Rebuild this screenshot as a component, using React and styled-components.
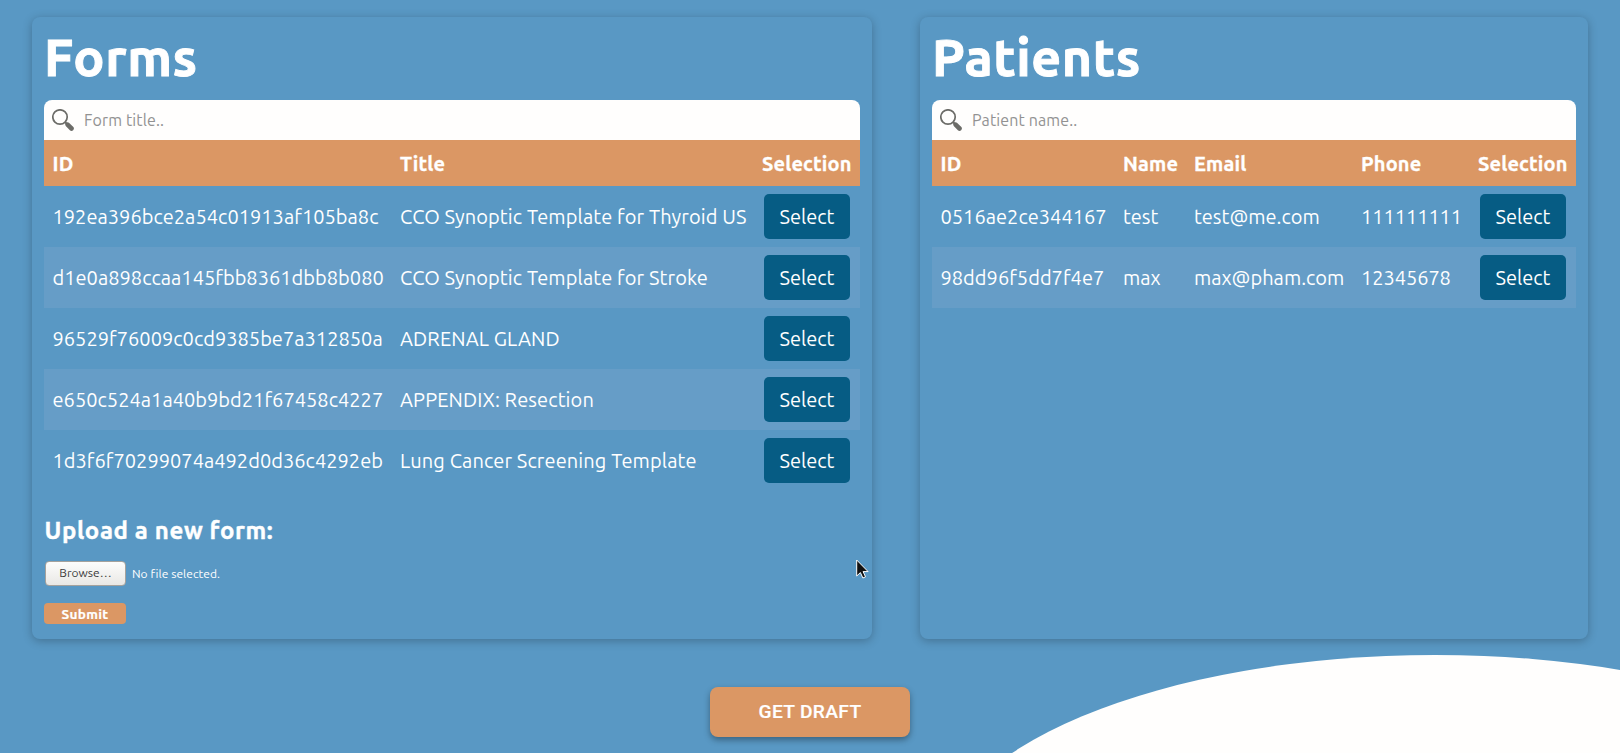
import React from 'react';
import styled, { createGlobalStyle } from 'styled-components';

const GlobalStyle = createGlobalStyle`
  * { box-sizing: border-box; }
  html, body { margin: 0; height: 100%; overflow: hidden; }
  body {
    background: #5998c4;
    color: #fff;
    font-family: Ubuntu, "Noto Sans", "Open Sans", sans-serif;
  }
`;

const Page = styled.div`
  position: relative;
  height: 753px;
  overflow: hidden;
  padding: 17px 32px 0;
`;

const Wave = styled.div`
  position: absolute;
  left: 935px;
  top: 655px;
  width: 1000px;
  height: 420px;
  border-radius: 50%;
  background: #fffefd;
`;

const Panels = styled.main`
  position: relative;
  display: flex;
  justify-content: space-between;
  height: 622px;
`;

const Panel = styled.section`
  width: ${(p) => p.$width}px;
  padding: 12px;
  border-radius: 8px;
  box-shadow: 0 2px 10px rgba(0, 0, 0, 0.25);
  background: #5998c4;
`;

const Title = styled.h1`
  margin: 0;
  height: 71px;
  font-size: 52px;
  line-height: 57px;
  font-weight: 700;
  letter-spacing: 0.55px;
  -webkit-text-stroke: 0.9px #fff;
`;

const Search = styled.label`
  display: flex;
  align-items: center;
  gap: 10px;
  height: 40px;
  padding-left: 8px;
  border-radius: 8px 8px 0 0;
  background: #fffefd;
`;

const SearchInput = styled.input`
  flex: 1;
  border: 0;
  padding: 0;
  outline: 0;
  background: transparent;
  font: 16px/24px Ubuntu, "Noto Sans", sans-serif;
  letter-spacing: 0.12px;
  &::placeholder { color: #929292; opacity: 1; }
`;

const Row = styled.div`
  display: grid;
  grid-template-columns: ${(p) => p.$columns};
  align-items: center;
  height: 61px;
  background: ${(p) => (p.$striped ? '#669dc7' : 'transparent')};
`;

const Cell = styled.div`
  padding-left: 8px;
  font-size: 20px;
  line-height: 28px;
  white-space: nowrap;
  letter-spacing: ${(p) => p.$spacing || 0}px;

  &:first-child { padding-left: 8.5px; }
`;

const HeaderRow = styled(Row)`
  height: 46px;
  padding-top: 1px;
  background: #db9764;
  font-weight: 700;

  ${Cell} {
    letter-spacing: 0.15px;
    -webkit-text-stroke: 0.3px #fff;
  }
`;

const SelectButton = styled.button`
  justify-self: center;
  width: 86px;
  height: 45px;
  padding: 0;
  border: 0;
  border-radius: 5px;
  background: #065c84;
  color: #fff;
  font: 20px/28px Ubuntu, "Noto Sans", sans-serif;
`;

const UploadTitle = styled.h2`
  margin: 24px 0 0;
  height: 46px;
  padding-left: 0.5px;
  font-size: 24px;
  line-height: 32px;
  letter-spacing: 0.62px;
  -webkit-text-stroke: 0.4px #fff;
`;

const FileRow = styled.div`
  display: flex;
  align-items: center;
  gap: 6px;
  height: 24px;
  padding-left: 1px;
  font-size: 12px;
  letter-spacing: 0.05px;
`;

const BrowseButton = styled.button`
  width: 81px;
  height: 25px;
  padding: 0;
  border: 1px solid #a5a29d;
  border-radius: 4px;
  background: linear-gradient(#fdfdfc, #e9e8e5);
  color: #3c3c3c;
  font: 12px/16px Ubuntu, "Noto Sans", sans-serif;
`;

const SubmitButton = styled.button`
  display: block;
  width: 82px;
  height: 21px;
  margin-top: 18px;
  padding: 0;
  border: 0;
  border-radius: 4px;
  background: #db9764;
  color: #fff;
  font: 700 13.6px/20px Ubuntu, "Noto Sans", sans-serif;
  letter-spacing: 0.3px;
  -webkit-text-stroke: 0.2px #fff;
`;

const Actions = styled.footer`
  position: relative;
  display: flex;
  justify-content: center;
  padding-top: 48px;
`;

const DraftButton = styled.button`
  width: 200px;
  height: 50px;
  padding: 0;
  border: 0;
  border-radius: 8px;
  background: #db9764;
  box-shadow: 0 3px 6px rgba(0, 0, 0, 0.35);
  color: #fff;
  font: 500 19.2px/24px Roboto, sans-serif;
  letter-spacing: 0.35px;
  -webkit-text-stroke: 0.2px #fff;
`;

const Pointer = styled.svg`
  position: absolute;
  left: 856px;
  top: 559px;
`;

const SearchIcon = () => (
  <svg width="22" height="22" viewBox="0 0 22 22" fill="none" stroke="#6c6c68">
    <circle cx="8" cy="8" r="7.2" strokeWidth="1.7" />
    <path d="M13 13l2.5 2.5" strokeWidth="2" />
    <path d="M15.6 15.6l3.9 3.9" strokeWidth="4.6" strokeLinecap="round" />
  </svg>
);

const formColumns = '348px 1fr 106px';
const patientColumns = '183px 71px 167px 1fr 106px';

const forms = [
  ['192ea396bce2a54c01913af105ba8c', 'CCO Synoptic Template for Thyroid US'],
  ['d1e0a898ccaa145fbb8361dbb8b080', 'CCO Synoptic Template for Stroke'],
  ['96529f76009c0cd9385be7a312850a', 'ADRENAL GLAND'],
  ['e650c524a1a40b9bd21f67458c4227', 'APPENDIX: Resection'],
  ['1d3f6f70299074a492d0d36c4292eb', 'Lung Cancer Screening Template'],
];

const patients = [
  ['0516ae2ce344167', 'test', 'test@me.com', '111111111'],
  ['98dd96f5dd7f4e7', 'max', 'max@pham.com', '12345678'],
];

function Table({ columns, headers, rows, spacings }) {
  return (
    <div>
      <HeaderRow $columns={columns}>
        {headers.map((h) => <Cell key={h}>{h}</Cell>)}
      </HeaderRow>
      {rows.map((row, i) => (
        <Row key={row[0]} $columns={columns} $striped={i % 2 === 1}>
          {row.map((text, c) => <Cell key={text} $spacing={spacings[c]}>{text}</Cell>)}
          <SelectButton>Select</SelectButton>
        </Row>
      ))}
    </div>
  );
}

export default function App() {
  return (
    <Page>
      <GlobalStyle />
      <Wave />
      <Panels>
        <Panel $width={840}>
          <Title>Forms</Title>
          <Search><SearchIcon /><SearchInput placeholder="Form title.." /></Search>
          <Table
            columns={formColumns}
            headers={['ID', 'Title', 'Selection']}
            rows={forms}
            spacings={[0.03, 0.11]}
          />
          <UploadTitle>Upload a new form:</UploadTitle>
          <FileRow><BrowseButton>Browse…</BrowseButton><span>No file selected.</span></FileRow>
          <SubmitButton>Submit</SubmitButton>
        </Panel>
        <Panel $width={668}>
          <Title>Patients</Title>
          <Search><SearchIcon /><SearchInput placeholder="Patient name.." /></Search>
          <Table
            columns={patientColumns}
            headers={['ID', 'Name', 'Email', 'Phone', 'Selection']}
            rows={patients}
            spacings={[0.03, 0, 0, -0.05]}
          />
        </Panel>
      </Panels>
      <Actions><DraftButton>GET DRAFT</DraftButton></Actions>
      <Pointer width="14" height="21" viewBox="0 0 14 21">
        <path d="M.7 1v16l3.7-3.4 2.5 5.4 2.6-1.2-2.4-5.2h5z" fill="#111" stroke="#fff" />
      </Pointer>
    </Page>
  );
}
